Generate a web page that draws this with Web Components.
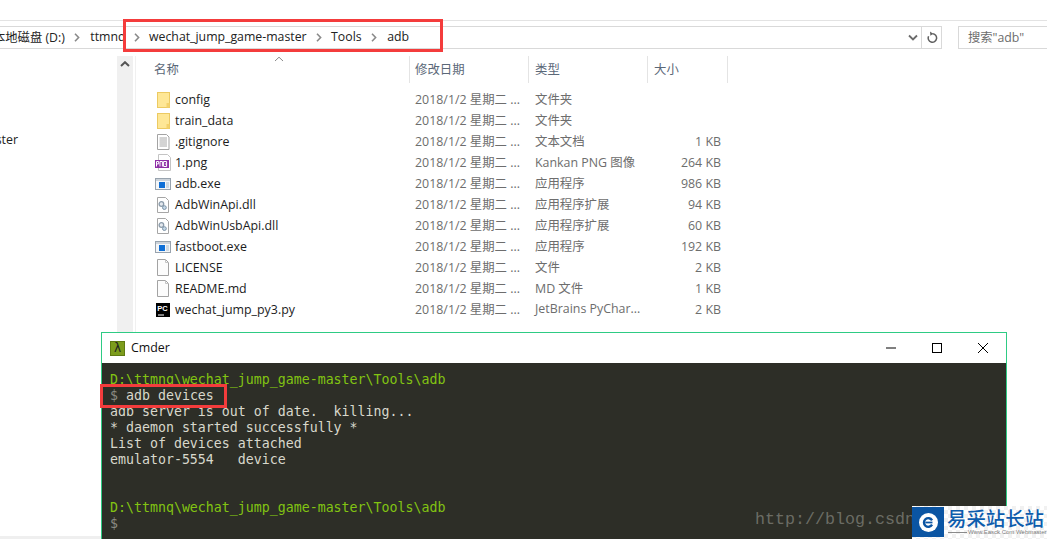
<!DOCTYPE html>
<html lang="zh">
<head>
<meta charset="utf-8">
<title>adb</title>
<style>
    html, body { margin: 0; height: 100%; background: #fff; overflow: hidden; }
    body { position: relative; font-family: "Open Sans", "Noto Sans CJK SC", sans-serif; }
</style>
</head>
<body>
<explorer-window>
    <address-bar slot="bar"></address-bar>
    <side-pane slot="side">ster</side-pane>
    <file-list slot="list"></file-list>
</explorer-window>

<cmder-window></cmder-window>

<mark-box style="left:123px;top:19px;width:320px;height:33px"></mark-box>
<mark-box style="left:100px;top:384px;width:127px;height:24px"></mark-box>

<site-badge></site-badge>

<script>
const CJK = '"Open Sans", "Noto Sans CJK SC", sans-serif';

class ExplorerWindow extends HTMLElement {
    constructor() {
        super();
        this.attachShadow({ mode: 'open' });
        this.shadowRoot.innerHTML = `
            <style>
                :host { display: flex; flex-direction: column; height: 539px; font-family: ${CJK}; }
                .top { height: 20px; border-bottom: 1px solid #e3e3e3; flex: none; }
                .bar { flex: none; padding-top: 5px; }
                .main { flex: 1; display: flex; padding-top: 7px; min-height: 0; }
                .foot { height: 3px; background: #efefef; flex: none; }
            </style>
            <div class="top"></div>
            <div class="bar"><slot name="bar"></slot></div>
            <div class="main">
                <slot name="side"></slot>
                <slot name="list"></slot>
            </div>
            <div class="foot"></div>
        `;
    }
}

class AddressBar extends HTMLElement {
    constructor() {
        super();
        this.attachShadow({ mode: 'open' });
        const chev = `<svg width="6" height="9" viewBox="0 0 6 9"><path d="M1 .8 4.6 4.5 1 8.2" fill="none" stroke="#8a8a8a" stroke-width="1.6"/></svg>`;
        this.shadowRoot.innerHTML = `
            <style>
                :host { display: flex; height: 23px; font-size: 12.3px; color: #222; }
                .crumbs {
                    width: 922px; box-sizing: border-box; border: 1px solid #d9d9d9; border-left: 0;
                    display: flex; align-items: center; overflow: hidden; position: relative; padding-bottom: 2px;
                }
                .c { white-space: nowrap; flex: none; }
                .first { margin-left: -7px; }
                svg { flex: none; display: block; }
                .s { margin: 2px 10px 0 9.5px; }
                .s.t1 { margin-left: 8.5px; margin-right: 9px; }
                .s.t2 { margin-right: 9.5px; margin-left: 9px; }
                .drop { position: absolute; right: 3px; top: 7px; }
                .refresh {
                    width: 20px; box-sizing: border-box; border: 1px solid #d9d9d9; border-left: 0;
                    display: flex; align-items: center; justify-content: center; padding-left: 1px;
                }
                .search {
                    margin-left: 16px; flex: 1; box-sizing: border-box; border: 1px solid #d9d9d9; border-right: 0;
                    display: flex; align-items: center; padding: 0 0 2px 9px; color: #6d6d6d;
                }
            </style>
            <div class="crumbs">
                <span class="c first">本地磁盘 (D:)</span><span class="s">${chev}</span>
                <span class="c">ttmnq</span><span class="s t1">${chev}</span>
                <span class="c">wechat_jump_game-master</span><span class="s t2">${chev}</span>
                <span class="c">Tools</span><span class="s">${chev}</span>
                <span class="c">adb</span>
                <svg class="drop" width="10" height="8" viewBox="0 0 10 8"><path d="M1 1.5 5 5.5 9 1.5" fill="none" stroke="#6b6b6b" stroke-width="1.8"/></svg>
            </div>
            <div class="refresh">
                <svg width="11" height="13" viewBox="0 0 11 13"><path d="M5.5 2.8A4.2 4.2 0 1 1 1.6 5.2" fill="none" stroke="#5f5f5f" stroke-width="1.5"/><path d="M3 .6 6.2 2.8 3.4 4.8z" fill="#5f5f5f"/></svg>
            </div>
            <div class="search">搜索"adb"</div>
        `;
    }
}

class SidePane extends HTMLElement {
    constructor() {
        super();
        this.attachShadow({ mode: 'open' });
        this.shadowRoot.innerHTML = `
            <style>
                :host { display: flex; flex: none; font-size: 12.4px; color: #222; }
                .tree { width: 117px; overflow: hidden; position: relative; }
                .tree span { display: block; margin: 75px 0 0 -23px; white-space: nowrap; width: 41px; text-align: right; }
                .scroll { width: 16px; background: #f0f0f0; padding-top: 5px; height: 280px; box-sizing: border-box; margin-right: 2px; }
                .scroll svg { display: block; margin: 0 auto; }
                .rule { width: 1px; height: 280px; background: #f0f0f0; }
            </style>
            <div class="tree"><span><slot></slot></span></div>
            <div class="scroll">
                <svg width="10" height="6" viewBox="0 0 10 6"><path d="M1 5 5 1.2 9 5" fill="none" stroke="#555" stroke-width="2"/></svg>
            </div>
            <div class="rule"></div>
        `;
    }
}

const FILES = [
    ['folder', 'config', '文件夹', ''],
    ['folder', 'train_data', '文件夹', ''],
    ['text', '.gitignore', '文本文档', '1 KB'],
    ['png', '1.png', 'Kankan PNG 图像', '264 KB'],
    ['exe', 'adb.exe', '应用程序', '986 KB'],
    ['dll', 'AdbWinApi.dll', '应用程序扩展', '94 KB'],
    ['dll', 'AdbWinUsbApi.dll', '应用程序扩展', '60 KB'],
    ['exe', 'fastboot.exe', '应用程序', '192 KB'],
    ['blank', 'LICENSE', '文件', '2 KB'],
    ['blank', 'README.md', 'MD 文件', '1 KB'],
    ['pc', 'wechat_jump_py3.py', 'JetBrains PyChar...', '2 KB']
];

const ICONS = {
    folder: `<rect x="3.5" y="1.5" width="12" height="15" fill="#fee796" stroke="#ecca62"/><rect x="12.5" y="12" width="3" height="4.5" fill="#f3d26c"/>`,
    text: `<path d="M3.5 1.5h9l2.5 2.5v12.5H3.5z" fill="#fff" stroke="#a3a3a3"/><path d="M5.5 5h7.5M5.5 7h7.5M5.5 9h7.5M5.5 11h7.5M5.5 13h7.5" stroke="#a8a8a8"/>`,
    png: `<path d="M4.5 .5h9l3 3v13h-12z" fill="#fff" stroke="#c4c4c4"/><rect x="1" y="6" width="14" height="8" fill="#8e2ea6"/><path d="M2.5 12.5v-5h2.2v2.4h-2.2M6 12.5v-5h2.4v5M9.6 7.5h3v5h-3zM12.6 10h-1.4" fill="none" stroke="#fff"/>`,
    exe: `<rect x="1.5" y="3.5" width="15" height="11" fill="#f4f6f8" stroke="#98a3ae"/><rect x="2" y="4" width="14" height="2" fill="#ccd3da"/><rect x="5" y="7" width="6" height="6" fill="#0f6fd6"/><path d="M12 8h3M12 10h3M12 12h3" stroke="#a9bccd"/>`,
    dll: `<path d="M3.5 1.5h8l3 3v12h-11z" fill="#fff" stroke="#a6a6a6"/><circle cx="7.4" cy="8" r="2.3" fill="#e4e9ee" stroke="#8c9cab" stroke-width="1.3"/><circle cx="10.4" cy="11.6" r="1.9" fill="#c4d8e8" stroke="#7e93a6"/>`,
    blank: `<path d="M3.5 .5h8l3 3v13h-11z" fill="#fcfcfc" stroke="#a3a3a3"/><path d="M11.5 .5v3h3" fill="none" stroke="#c4c4c4"/>`,
    pc: `<rect x="2" y="2" width="14" height="14" fill="#000"/><path d="M4 14h6" stroke="#fff"/>`
};

class FileIcon extends HTMLElement {
    constructor() {
        super();
        this.attachShadow({ mode: 'open' });
    }
    connectedCallback() {
        const kind = this.getAttribute('kind');
        const label = kind === 'pc'
            ? `<text x="3.2" y="9.6" font-family="Liberation Sans, sans-serif" font-size="7.5" font-weight="700" fill="#fff">PC</text>` : '';
        this.shadowRoot.innerHTML = `
            <style>:host { display: block; width: 18px; height: 18px; flex: none; } svg { display: block; }</style>
            <svg width="18" height="18" viewBox="0 0 18 18">${ICONS[kind]}${label}</svg>
        `;
    }
}

class FileList extends HTMLElement {
    constructor() {
        super();
        this.attachShadow({ mode: 'open' });
        const rows = FILES.map(([kind, name, type, size]) => `
            <div class="row">
                <div class="name"><file-icon kind="${kind}"></file-icon><span>${name}</span></div>
                <div class="date">2018/1/2 星期二 ...</div>
                <div class="type">${type}</div>
                <div class="size">${size}</div>
            </div>`).join('');
        this.shadowRoot.innerHTML = `
            <style>
                :host { display: block; flex: 1; font-size: 12.4px; }
                .head, .row { display: grid; grid-template-columns: 274px 119px 119px 80px; }
                .head { height: 27px; margin-bottom: 6px; color: #5b6878; }
                .head div { display: flex; align-items: center; padding: 0 0 2px 6px; border-right: 1px solid #e4e4e4; }
                .head div:first-child { padding-left: 18px; }
                .head div:nth-child(2) { padding-left: 5px; }
                .row { height: 21px; align-items: center; color: #6d6d6d; white-space: nowrap; }
                .name { display: flex; align-items: center; padding-left: 18px; color: #1c1c1c; gap: 3px; }
                .date, .type { padding: 0 0 2px 6px; overflow: hidden; }
                .date { padding-left: 5px; }
                .size { text-align: right; padding-right: 7px; }
                .sort { position: absolute; left: 274px; top: 56px; }
            </style>
            <div class="head">
                <div>名称</div><div>修改日期</div><div>类型</div><div>大小</div>
            </div>
            <svg class="sort" width="10" height="6" viewBox="0 0 10 6"><path d="M1 5 5 1.2 9 5" fill="none" stroke="#8a8a8a"/></svg>
            ${rows}
        `;
    }
}

class CmderWindow extends HTMLElement {
    constructor() {
        super();
        this.attachShadow({ mode: 'open' });
        this.shadowRoot.innerHTML = `
            <style>
                :host {
                    position: absolute; left: 101px; top: 332px; width: 906px; height: 207px;
                    box-sizing: border-box; border: 1px solid #2ecb84; border-bottom: 0;
                    display: flex; flex-direction: column; background: #fff;
                }
                .title {
                    height: 30px; flex: none; display: flex; align-items: center; padding-left: 8px; gap: 6px;
                    font-family: ${CJK}; font-size: 12.4px; color: #111;
                }
                .title span { margin-top: -2px; }
                .logo {
                    width: 15px; height: 15px; background: #7c9c1c; border: 1px solid #5f7a12; box-sizing: border-box;
                    color: #222; font: 12px/13px "DejaVu Sans", sans-serif; text-align: center;
                }
                .ctl { margin-left: auto; display: flex; }
                .ctl svg { display: block; width: 46px; height: 30px; }
                .term {
                    flex: 1; background: #2d2e27; padding: 9px 0 0 8px; margin: 0;
                    font: 13.28px/16px "DejaVu Sans Mono", monospace; color: #d8d8cc; white-space: pre;
                }
                .path { color: #82c412; }
                .ps { color: #8a8a82; }
                .blog {
                    position: absolute; left: 653px; top: 176px;
                    font: 16.67px/22px "Liberation Mono", monospace; color: #6b6c64; white-space: nowrap;
                }
            </style>
            <div class="title">
                <div class="logo">λ</div>
                <span>Cmder</span>
                <div class="ctl">
                    <svg viewBox="0 0 46 30"><path d="M18 15h10" stroke="#000"/></svg>
                    <svg viewBox="0 0 46 30"><rect x="18.5" y="10.5" width="9" height="9" fill="none" stroke="#000"/></svg>
                    <svg viewBox="0 0 46 30"><path d="M18 10l10 10M28 10 18 20" stroke="#000" fill="none"/></svg>
                </div>
            </div>
<pre class="term"><span class="path">D:\\ttmnq\\wechat_jump_game-master\\Tools\\adb</span>
<span class="ps">$</span> adb devices
adb server is out of date.  killing...
* daemon started successfully *
List of devices attached
emulator-5554   device


<span class="path">D:\\ttmnq\\wechat_jump_game-master\\Tools\\adb</span>
<span class="ps">$</span></pre>
            <div class="blog">http://blog.csdn</div>
        `;
    }
}

class MarkBox extends HTMLElement {
    constructor() {
        super();
        this.attachShadow({ mode: 'open' });
        this.shadowRoot.innerHTML = `
            <style>
                :host { position: absolute; box-sizing: border-box; border: 3px solid #f43c3c; display: block; }
            </style>
        `;
    }
}

class SiteBadge extends HTMLElement {
    constructor() {
        super();
        this.attachShadow({ mode: 'open' });
        this.shadowRoot.innerHTML = `
            <style>
                :host {
                    position: absolute; left: 912px; top: 506px; width: 135px; height: 33px;
                    display: flex; font-family: "Noto Sans CJK SC", sans-serif;
                    background: repeating-conic-gradient(#f1f1f1 0 25%, #fff 0 50%) 0 0 / 8px 8px;
                }
                .sq { width: 32px; height: 30px; margin-top: 1px; background: #0b55a3; flex: none; display: flex; align-items: center; justify-content: center; }
                .txt { margin-left: 3px; color: #0d5cad; }
                .big { font-size: 19.4px; line-height: 23px; font-weight: 500; white-space: nowrap; margin-top: 0; }
                .small { font: 6px/7px "Liberation Sans", sans-serif; color: #7a7a7a; white-space: nowrap; padding-left: 21px; position: relative; }
                .small::before { content: ""; position: absolute; left: 1px; top: 3px; width: 19px; height: 1px; background: #8a8a8a; }
            </style>
            <div class="sq">
                <svg width="19" height="19" viewBox="0 0 24 24">
                    <circle cx="12" cy="12" r="12" fill="#fff"/>
                    <path d="M16.5 9.2A5.5 5.5 0 1 0 16.5 14.8" fill="none" stroke="#0b55a3" stroke-width="3"/>
                    <path d="M8 12h9" stroke="#0b55a3" stroke-width="2.2"/>
                </svg>
            </div>
            <div class="txt">
                <div class="big">易采站长站</div>
                <div class="small">Www.Easck.Com Webmaster</div>
            </div>
        `;
    }
}

customElements.define('file-icon', FileIcon);
customElements.define('explorer-window', ExplorerWindow);
customElements.define('address-bar', AddressBar);
customElements.define('side-pane', SidePane);
customElements.define('file-list', FileList);
customElements.define('cmder-window', CmderWindow);
customElements.define('mark-box', MarkBox);
customElements.define('site-badge', SiteBadge);
</script>
</body>
</html>
